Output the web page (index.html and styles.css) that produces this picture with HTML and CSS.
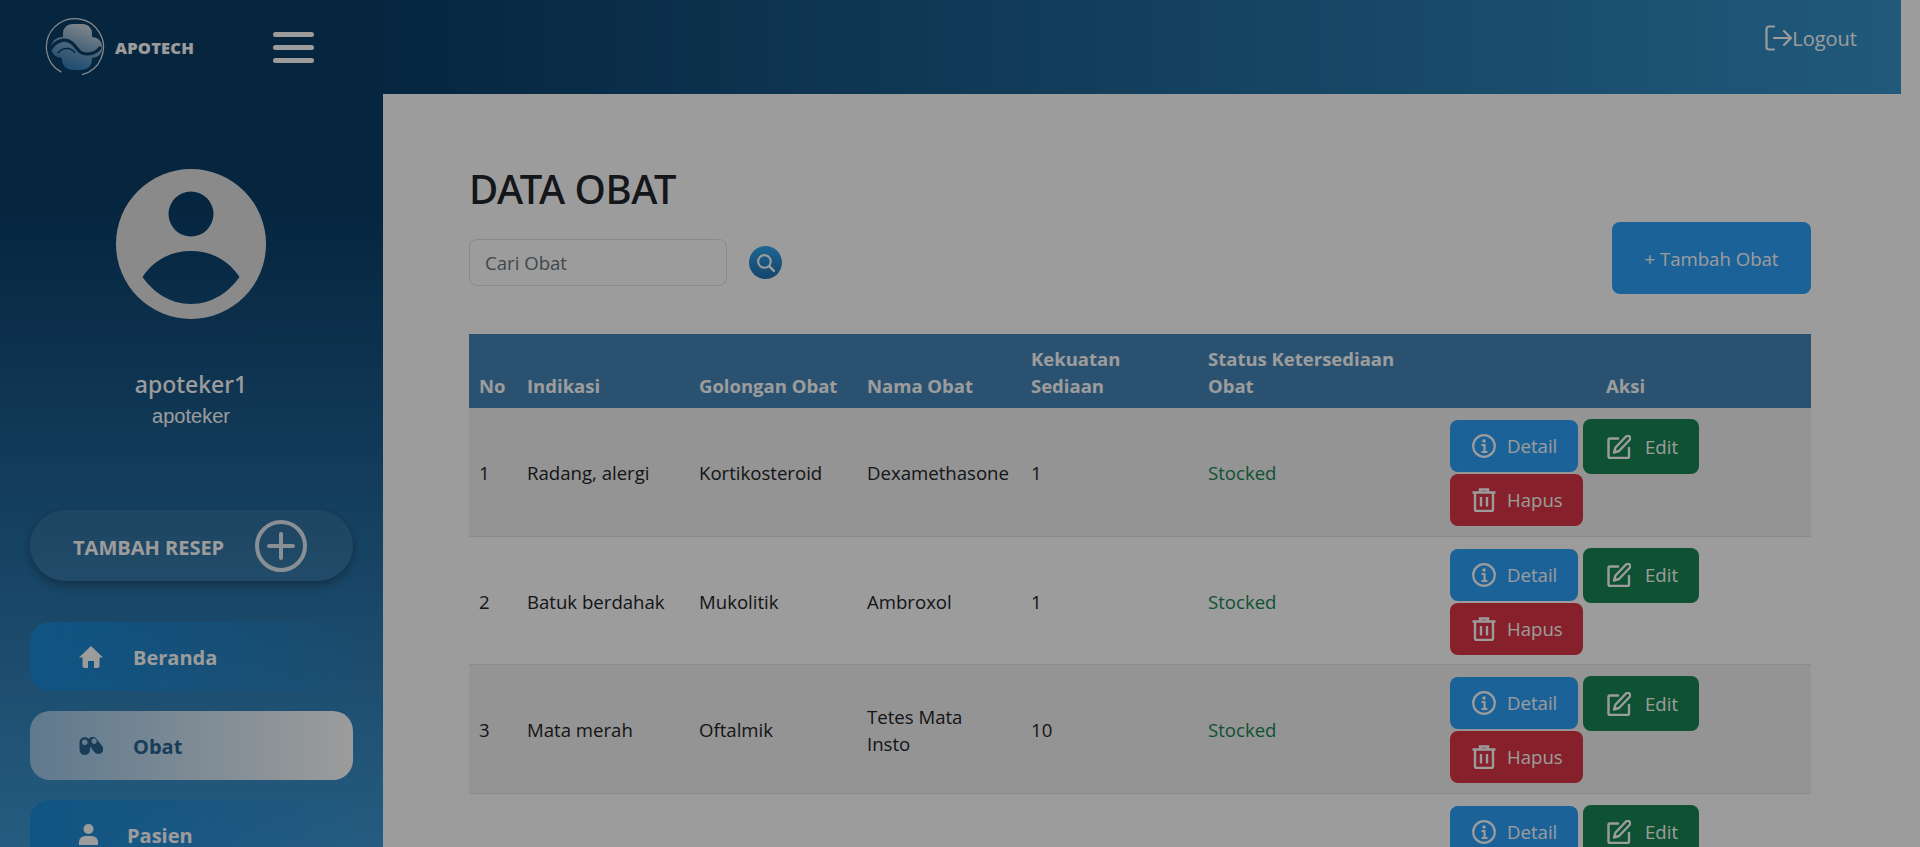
FILE: index.html
```html
<!DOCTYPE html>
<html lang="en">
<head>
  <meta charset="UTF-8" />
  <meta name="viewport" content="width=device-width, initial-scale=1.0" />
  <title>Apotech - Data Obat</title>
  <link rel="stylesheet" href="styles.css">
</head>
<body>
  <div class="layout">
    <aside class="sidebar">
      <div class="brand-row">
        <div class="brand">
          <svg class="brand-logo" viewBox="0 0 60 60" width="60" height="60" aria-hidden="true">
            <defs>
              <linearGradient id="logoFill" x1="0.7" y1="0" x2="0.3" y2="1">
                <stop offset="0" stop-color="#d5dde3" />
                <stop offset="0.5" stop-color="#7ba6c8" />
                <stop offset="1" stop-color="#2a79b8" />
              </linearGradient>
            </defs>
            <path d="M13 53A28.500 28.500 0 1 1 33 58.400" fill="none" stroke="#dfe5e9" stroke-width="1.200" transform="rotate(-8 30 30)" />
            <path d="M18 16a9 9 0 0 1 9-9h11a9 9 0 0 1 9 9v4a10 10 0 0 1 0 21v2a10 10 0 0 1-10 10h-10a10 10 0 0 1-10-10v-2a11 11 0 0 1-11-10 11 11 0 0 1 12-11z" fill="url(#logoFill)" />
            <path d="M5 33C10 24 20 20 27 26 33 31 33 37 42 37 47 37 52 35 55 31" fill="none" stroke="#0a3e69" stroke-width="3.200" stroke-linecap="round" />
            <path d="M13 36c5-6 13-6 17 0" fill="none" stroke="#0a3e69" stroke-width="1.500" />
          </svg>
          <span class="brand-name">APOTECH</span>
        </div>
        <div class="burger"><span></span><span></span><span></span></div>
      </div>

      <div class="profile">
        <svg class="avatar" viewBox="0 0 150 150" width="150" height="150" aria-hidden="true">
          <path fill-rule="evenodd" fill="#e2e2e2" d="M75 0a75 75 0 1 1 0 150A75 75 0 0 1 75 0zM75 22.500a22.500 22.500 0 1 0 0 45 22.500 22.500 0 0 0 0-45zM26.500 108C37 123 54 135 75 135s38-12 48.500-27C113 92 96 82 75 82s-38 10-48.500 26z" />
        </svg>
        <div class="profile-name">apoteker1</div>
        <div class="profile-role">apoteker</div>
      </div>

      <a class="add-recipe">
        <span>TAMBAH RESEP</span>
        <svg viewBox="0 0 52 52" width="52" height="52" aria-hidden="true">
          <circle cx="26" cy="26" r="24" fill="none" stroke="currentColor" stroke-width="4" />
          <path d="M26 14v24M14 26h24" fill="none" stroke="currentColor" stroke-width="4" stroke-linecap="round" />
        </svg>
      </a>

      <nav class="side-nav">
        <a class="side-link">
          <svg class="side-icon" viewBox="0 0 24 22" width="24" height="22" aria-hidden="true"><path fill="currentColor" d="M12 0 24 11.500h-3.500V20a2 2 0 0 1-2 2H15v-7H9v7H5.500a2 2 0 0 1-2-2v-8.500H0z" /></svg>
          <span>Beranda</span>
        </a>
        <a class="side-link active">
          <svg class="side-icon" viewBox="0 0 24 18" width="24" height="18" aria-hidden="true">
            <rect x="0.500" y="0" width="10.500" height="18" rx="5.250" fill="currentColor" />
            <rect x="11.500" y="-1" width="10" height="19" rx="5" fill="currentColor" transform="rotate(-38 16.500 8.500)" />
            <rect x="3" y="2.500" width="5.500" height="5.500" rx="2.700" fill="#a8cdea" />
            <rect x="12.500" y="1.500" width="5" height="5.500" rx="2.500" fill="#a8cdea" transform="rotate(-38 15 4)" />
          </svg>
          <span>Obat</span>
        </a>
        <a class="side-link pasien">
          <svg class="side-icon" viewBox="0 0 19 21" width="19" height="21" aria-hidden="true"><circle cx="9.500" cy="5" r="5" fill="currentColor" /><path fill="currentColor" d="M0 21v-3a6 6 0 0 1 6-6h7a6 6 0 0 1 6 6v3z" /></svg>
          <span>Pasien</span>
        </a>
      </nav>
    </aside>

    <div class="main">
      <header class="topbar">
        <a class="logout">
          <svg viewBox="0 0 27 26" width="27" height="26" aria-hidden="true">
            <path d="M9 1.500H4a2.500 2.500 0 0 0-2.500 2.500v18A2.500 2.500 0 0 0 4 24.500h5M9 13h16M19 6l7 7-7 7" fill="none" stroke="currentColor" stroke-width="2.200" stroke-linecap="round" stroke-linejoin="round" />
          </svg>
          <span>Logout</span>
        </a>
      </header>

      <main class="content">
        <h1>DATA OBAT</h1>
        <div class="toolbar">
          <div class="search">
            <input type="text" placeholder="Cari Obat" />
            <button class="search-btn" aria-label="Cari">
              <svg viewBox="0 0 20 20" width="21" height="21" aria-hidden="true">
                <circle cx="9" cy="9" r="6" fill="none" stroke="currentColor" stroke-width="2" />
                <path d="M13.500 13.500 18 18" fill="none" stroke="currentColor" stroke-width="2.400" stroke-linecap="round" />
              </svg>
            </button>
          </div>
          <button class="add-btn">+ Tambah Obat</button>
        </div>

        <table class="drug-table">
          <colgroup>
            <col class="c-no" /><col class="c-ind" /><col class="c-gol" /><col class="c-nama" /><col class="c-kek" /><col class="c-status" /><col class="c-aksi" />
          </colgroup>
          <thead>
            <tr>
              <th>No</th>
              <th>Indikasi</th>
              <th>Golongan Obat</th>
              <th>Nama Obat</th>
              <th>Kekuatan Sediaan</th>
              <th>Status Ketersediaan Obat</th>
              <th class="center">Aksi</th>
            </tr>
          </thead>
          <tbody id="drugRows"></tbody>
        </table>
      </main>
    </div>
  </div>

  <div class="backdrop"></div>

  <template id="actions">
    <div class="actions">
      <a class="act act-detail">
        <svg viewBox="0 0 24 24" width="24" height="24" aria-hidden="true"><circle cx="12" cy="12" r="10.800" fill="none" stroke="currentColor" stroke-width="2.200" /><circle cx="12" cy="7" r="1.800" fill="currentColor" /><path d="M9.500 11H12.500V17.500M9.500 18H15.500" fill="none" stroke="currentColor" stroke-width="2.200" /></svg>
        <span>Detail</span>
      </a>
      <a class="act act-edit">
        <svg viewBox="0 0 24 24" width="24" height="24" aria-hidden="true"><path d="M11 3.500H3A1.500 1.500 0 0 0 1.500 5v16.500A1.500 1.500 0 0 0 3 23h17.500a1.500 1.500 0 0 0 1.500-1.500V13" fill="none" stroke="currentColor" stroke-width="2.400" stroke-linecap="round" /><path d="M19 1.500a2.300 2.300 0 0 1 3.500 3.500L12 16l-5 1.500L8.500 12.500z" fill="none" stroke="currentColor" stroke-width="2.400" stroke-linejoin="round" /></svg>
        <span>Edit</span>
      </a>
      <a class="act act-delete">
        <svg viewBox="0 0 24 24" width="24" height="24" aria-hidden="true"><path d="M0.500 4.500h23M8 4.500V1.500h8v3M3 4.500v17A1.500 1.500 0 0 0 4.500 23h15a1.500 1.500 0 0 0 1.500-1.500v-17M9 9v9.500M15 9v9.500" fill="none" stroke="currentColor" stroke-width="2.400" /></svg>
        <span>Hapus</span>
      </a>
    </div>
  </template>

  <script>
  const drugs = [
    ["1", "Radang, alergi", "Kortikosteroid", "Dexamethasone", "1", "Stocked"],
    ["2", "Batuk berdahak", "Mukolitik", "Ambroxol", "1", "Stocked"],
    ["3", "Mata merah", "Oftalmik", "Tetes Mata\nInsto", "10", "Stocked"],
    ["4", "", "", "", "", ""]
  ];
  const drugRows = document.getElementById("drugRows");
  const actions = document.getElementById("actions");

  for (let drug of drugs) {
    const tr = document.createElement("tr");
    drug.forEach((value, i) => {
      const td = document.createElement("td");
      td.textContent = value;
      td.classList.add("text-cell");
      if (i === 5) td.classList.add("stocked");
      tr.appendChild(td);
    });
    const td = document.createElement("td");
    td.appendChild(actions.content.cloneNode(true));
    tr.appendChild(td);
    drugRows.appendChild(tr);
  }
  </script>
</body>
</html>
```

FILE: styles.css
```css
* {
  box-sizing: border-box;
}

html, body {
  height: 100%;
}

body {
  margin: 0;
  background: #fff;
  color: #212529;
  font-family: "Open Sans", "Noto Sans", sans-serif;
  font-size: 18.600px;
  line-height: 27px;
  overflow: hidden;
}

.layout {
  display: flex;
  height: 100vh;
}

/* sidebar */
.sidebar {
  flex: 0 0 383px;
  height: 100vh;
  padding-right: 1px;
  overflow: hidden;
  background: linear-gradient(180deg, #0a3e69 25%, #3e97d2 100%);
  color: #fff;
}

.brand-row {
  display: flex;
  align-items: center;
  height: 94px;
  padding-left: 45px;
}

.brand {
  display: flex;
  align-items: center;
  gap: 10px;
  width: 228px;
}

.brand-name {
  font-size: 16.500px;
  font-weight: 800;
  letter-spacing: 0.2px;
}

.burger {
  display: flex;
  flex-direction: column;
  gap: 8px;
  width: 41px;
}

.burger span {
  height: 5px;
  background: #fff;
  border-radius: 3px;
}

.profile {
  display: flex;
  flex-direction: column;
  align-items: center;
  padding-top: 75px;
  text-align: center;
}

.profile-name {
  margin-top: 47px;
  font-family: "Noto Sans", sans-serif;
  font-size: 23px;
  font-weight: 500;
  line-height: 36px;
}

.profile-role {
  font-family: "Liberation Sans", sans-serif;
  font-size: 20px;
  line-height: 28px;
}

.add-recipe {
  display: flex;
  align-items: center;
  justify-content: space-between;
  height: 71px;
  width: 323px;
  margin: 80px 0 0 30px;
  padding: 0 46px 0 43px;
  border-radius: 36px;
  background: rgba(255, 255, 255, 0.07);
  box-shadow: 0 4px 10px rgba(0, 0, 0, 0.3);
  font-size: 20px;
  font-weight: 700;
}

.add-recipe span {
  padding-top: 3px;
}

.add-recipe svg {
  color: rgba(255, 255, 255, 0.85);
}

.side-nav {
  display: flex;
  flex-direction: column;
  gap: 20px;
  width: 323px;
  margin: 41px 0 0 30px;
}

.side-link {
  display: flex;
  align-items: center;
  gap: 30px;
  height: 69px;
  padding-left: 49px;
  border-radius: 20px;
  background: linear-gradient(90deg, #1a8ad8, rgba(26, 138, 216, 0.05));
  font-size: 20px;
  font-weight: 700;
}

.side-link span {
  padding-top: 2px;
}

.side-link.active {
  background: linear-gradient(90deg, #9cc7e8, #fff);
  color: #2a6490;
}

.side-link.pasien {
  gap: 29px;
}

/* top bar */
.main {
  flex: 1;
  min-width: 0;
  margin-right: 19px;
}

.topbar {
  display: flex;
  align-items: center;
  justify-content: flex-end;
  height: 94px;
  padding: 0 44px 18px 0;
  background: linear-gradient(90deg, #0a3e69 0%, #3693ca 100%);
}

.logout {
  display: flex;
  align-items: center;
  color: #fff;
  font-size: 20px;
}

/* content */
.content {
  padding: 71px 90px 0 86px;
}

h1 {
  margin: 0 0 9px;
  font-family: "Noto Sans", sans-serif;
  font-size: 40px;
  font-weight: 500;
  line-height: 48px;
  letter-spacing: -0.500px;
}

.toolbar {
  display: flex;
  justify-content: space-between;
  margin-bottom: 40px;
}

.search {
  display: flex;
  align-items: center;
  gap: 22px;
  height: 47px;
  margin-top: 17px;
}

.search input {
  width: 258px;
  height: 47px;
  padding: 0 15px;
  border: 1px solid #dee2e6;
  border-radius: 8px;
  background: transparent;
  font: inherit;
}

.search input::placeholder {
  color: #6c757d;
}

.search-btn {
  display: flex;
  align-items: center;
  justify-content: center;
  width: 33px;
  height: 33px;
  padding: 0;
  border: none;
  border-radius: 50%;
  background: linear-gradient(180deg, #30a8f0, #2070b0);
  color: #fff;
}

.add-btn {
  width: 199px;
  height: 72px;
  border: none;
  border-radius: 8px;
  background: #2da1fb;
  color: #fff;
  font: inherit;
}

/* table */
.drug-table {
  width: 100%;
  border-collapse: collapse;
  table-layout: fixed;
}

.c-no { width: 48px; }
.c-ind { width: 172px; }
.c-gol { width: 168px; }
.c-nama { width: 164px; }
.c-kek { width: 177px; }
.c-status { width: 242px; }

.drug-table th {
  padding: 11px 10px 9px;
  background: #4586b8;
  color: #fff;
  font-size: 18.500px;
  font-weight: 700;
  text-align: left;
  vertical-align: bottom;
}

.drug-table th.center {
  text-align: center;
}

.drug-table td {
  padding: 11px 10px 9.500px;
  border-bottom: 1px solid #dee2e6;
  vertical-align: middle;
}

.drug-table td.text-cell {
  white-space: pre-line;
}

.drug-table tbody tr:nth-child(odd) td {
  background: rgba(0, 0, 0, 0.05);
}

.drug-table td.stocked {
  color: #198754;
}

.actions {
  display: flex;
  flex-wrap: wrap;
  align-items: flex-start;
  column-gap: 5px;
}

.act {
  display: flex;
  align-items: center;
  gap: 11px;
  color: #fff;
  border-radius: 8px;
  height: 52px;
  padding-left: 22px;
}

.act span {
  margin-top: -1px;
}

.act-detail {
  width: 128px;
  margin-top: 1px;
  background: #2da1fb;
}

.act-edit {
  width: 116px;
  height: 55px;
  padding-left: 24px;
  gap: 14px;
  background: #198754;
}

.act-delete {
  width: 133px;
  background: #dc3545;
}

/* page is dimmed behind an open dialog */
.backdrop {
  position: fixed;
  inset: 0;
  background: rgba(0, 0, 0, 0.39);
}
```
